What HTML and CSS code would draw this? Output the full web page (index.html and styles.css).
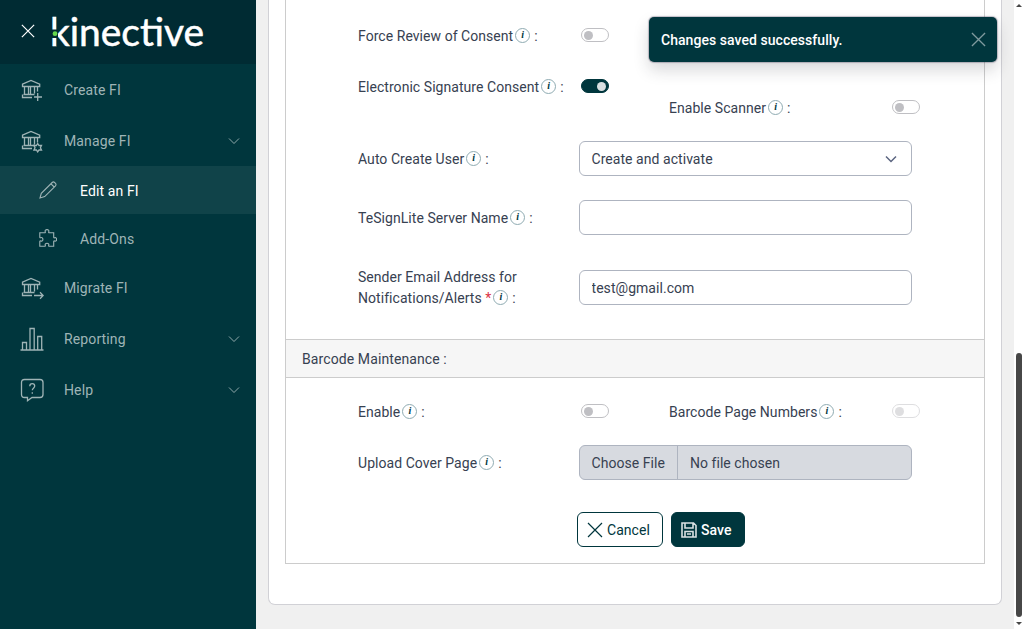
FILE: index.html
```
<!DOCTYPE html>
<html lang="en">
<head>
    <meta charset="UTF-8">
    <meta name="viewport" content="width=device-width, initial-scale=1.0">
    <title>Edit an FI - Kinective</title>
    <link rel="stylesheet" href="styles.css">
</head>
<body>
    <!-- shared icons -->
    <svg class="icon-defs" width="0" height="0">
        <symbol id="bank" viewBox="0 0 24 24">
            <path d="M2.500 6.200 11 2.500l8.700 3.700v2.300H2.500zM4.500 9v8M8.500 9v8M10.500 9v8M14.500 9v6.500M17.500 9v4.500M3.500 16.500h11M2.500 16.500v3h9.500"/>
        </symbol>
        <symbol id="close" viewBox="0 0 16 16">
            <path d="M1 1l14 14M15 1 1 15"/>
        </symbol>
        <symbol id="chevron" viewBox="0 0 12 8">
            <path d="M1 1.5l5 5 5-5"/>
        </symbol>
    </svg>

    <aside class="sidebar">
        <div class="sidebar-header">
            <svg class="menu-close"><use href="#close"/></svg>
            <svg class="brand" viewBox="0 0 160 52" role="img" aria-label="kinective">
                <text x="-1" y="39.500" textLength="154" lengthAdjust="spacingAndGlyphs">kinective</text>
                <rect class="brand-gap" x="0" y="23.500" width="7" height="8.500"/>
                <rect class="brand-gap" x="5.500" y="10" width="1.500" height="30"/>
                <circle class="brand-dot" cx="4" cy="27.700" r="2.400"/>
            </svg>
        </div>
        <nav>
            <a class="nav-item">
                <svg class="nav-icon" viewBox="0 0 24 24"><use href="#bank"/><path d="M17.700 15v8M14 19h8"/></svg>
                <span>Create FI</span>
            </a>
            <a class="nav-item">
                <svg class="nav-icon" viewBox="0 0 24 24"><use href="#bank"/><path d="M17.700 14.500l1.300 2 2.500-.1-1.100 2.300 1.100 2.300-2.500-.1-1.300 2-1.300-2-2.500.1 1.100-2.300-1.100-2.300 2.500.1z"/></svg>
                <span>Manage FI</span>
                <svg class="chevron"><use href="#chevron"/></svg>
            </a>
            <a class="nav-item sub active">
                <svg class="nav-icon small" viewBox="0 0 18 18"><path d="M1 17l1.300-4.700L13.200 1.500c.7-.7 1.700-.7 2.400 0l.9.9c.7.7.7 1.700 0 2.400L5.700 15.600zM12 2.800 15.200 6"/></svg>
                <span>Edit an FI</span>
            </a>
            <a class="nav-item sub">
                <svg class="nav-icon small" viewBox="0 0 18 18"><path d="M.8 3.800h5c.5 0 .7-.4.5-.9C5.700 1.500 6.600.6 8 .6s2.300.9 1.700 2.300c-.2.500 0 .9.500.9h4.500v4.500c0 .5.4.7.9.500 1.200-.5 2 .3 2 1.600s-.8 2.100-2 1.600c-.5-.2-.9 0-.9.500V17.200H10.200c-.5 0-.7-.4-.5-.9.500-1.200-.4-2-1.700-2s-2.200.8-1.700 2c.2.500 0 .9-.5.900h-5v-4.700c0-.5.400-.7.900-.5 1.400.5 2.200-.3 2.200-1.600s-.8-2.200-2.200-1.700c-.5.200-.9 0-.9-.5z"/></svg>
                <span>Add-Ons</span>
            </a>
            <a class="nav-item">
                <svg class="nav-icon" viewBox="0 0 24 24"><use href="#bank"/><path d="M14 19.500h9M20 16.300l3.200 3.200-3.200 3.200"/></svg>
                <span>Migrate FI</span>
            </a>
            <a class="nav-item">
                <svg class="nav-icon" viewBox="0 0 24 24"><path d="M.5 23h23M2.500 23v-7.500h4V23M10 23V1.500h4.200V23M17.700 23V9.500h4V23"/></svg>
                <span>Reporting</span>
                <svg class="chevron"><use href="#chevron"/></svg>
            </a>
            <a class="nav-item">
                <svg class="nav-icon" viewBox="0 0 24 24"><path d="M4.500 1.500h15.500q3 0 3 3v12q0 3-3 3h-8L7.500 22.700v-3.200h-3q-3 0-3-3v-12q0-3 3-3z"/><path d="M9.800 8.200c0-3.400 4.900-3.200 4.900-.2 0 2.200-2.400 2.100-2.400 4.200M12.300 14.200v1.600"/></svg>
                <span>Help</span>
                <svg class="chevron"><use href="#chevron"/></svg>
            </a>
        </nav>
    </aside>

    <main class="content">
        <div class="card">
            <form class="panel">
                <div class="section">
                    <div class="form-row">
                        <label>Force Review of Consent<i class="info">i</i>:</label>
                        <span class="switch"></span>
                    </div>
                    <div class="form-row signature">
                        <label>Electronic Signature Consent<i class="info">i</i>:</label>
                        <span class="switch on"></span>
                        <label class="scanner">Enable Scanner<i class="info">i</i>:</label>
                        <span class="switch scanner"></span>
                    </div>
                    <div class="form-row auto-create">
                        <label>Auto Create User<i class="info">i</i>:</label>
                        <div class="control select"><span>Create and activate</span><svg class="select-arrow"><use href="#chevron"/></svg></div>
                    </div>
                    <div class="form-row server">
                        <label>TeSignLite Server Name<i class="info">i</i>:</label>
                        <input class="control" type="text">
                    </div>
                    <div class="form-row email">
                        <label>
                            <span>Sender Email Address for</span><br>
                            <span>Notifications/Alerts</span> <b class="required">*</b><i class="info">i</i><span>:</span>
                        </label>
                        <input class="control" type="text" value="test@gmail.com">
                    </div>
                </div>

                <h2 class="section-title">Barcode Maintenance :</h2>

                <div class="section barcode">
                    <div class="form-row">
                        <label>Enable<i class="info">i</i>:</label>
                        <span class="switch"></span>
                        <label>Barcode Page Numbers<i class="info">i</i>:</label>
                        <span class="switch disabled"></span>
                    </div>
                    <div class="form-row upload">
                        <label>Upload Cover Page<i class="info">i</i>:</label>
                        <div class="control file">
                            <span class="file-button">Choose File</span>
                            <span class="file-name">No file chosen</span>
                        </div>
                    </div>
                    <div class="actions">
                        <button type="button" class="btn btn-outline"><svg><use href="#close"/></svg><span>Cancel</span></button>
                        <button type="button" class="btn btn-primary"><svg viewBox="0 0 16 16"><path d="M1 1h11.500L15 3.500V15H1zM4 1v5h8V1M4 15V9.500h8V15M6 12h4"/></svg><span>Save</span></button>
                    </div>
                </div>
            </form>
        </div>
    </main>

    <div class="scrollbar">
        <span class="arrow-up"></span>
        <span class="thumb"></span>
        <span class="arrow-down"></span>
    </div>

    <div class="toast">
        <span>Changes saved successfully.</span>
        <svg><use href="#close"/></svg>
    </div>
</body>
</html>
```

FILE: styles.css
```
* {
    margin: 0;
    padding: 0;
    box-sizing: border-box;
}

body {
    display: flex;
    height: 629px;
    overflow: hidden;
    background: #f0f0f0;
    color: #374151;
    font-family: Roboto, sans-serif;
    font-size: 14px;
    line-height: 21px;
    letter-spacing: 0.05px;
}

svg {
    display: block;
    flex: none;
    fill: none;
    stroke: currentColor;
}

.icon-defs {
    position: absolute;
}

/* sidebar */
.sidebar {
    width: 256px;
    flex: none;
    background: #00363d;
    color: #9fb4b6;
    letter-spacing: 0.12px;
}

.sidebar-header {
    display: flex;
    align-items: center;
    height: 64px;
    padding-left: 21px;
    background: #002b33;
    color: #fff;
}

.menu-close {
    width: 14px;
    height: 14px;
    margin-bottom: 2px;
    stroke-width: 1.4;
}

.brand {
    width: 160px;
    height: 52px;
    margin-left: 16px;
    stroke: none;
}

.brand text {
    fill: #fff;
    stroke: #fff;
    stroke-width: 0.5;
    font-family: Lato, sans-serif;
    font-size: 38px;
    letter-spacing: 0;
}

.brand-gap {
    fill: #002b33;
}

.brand-dot {
    fill: #65d84e;
}

.nav-item {
    display: flex;
    align-items: center;
    height: 51px;
    padding: 0 16px 0 20px;
}

.nav-item.sub {
    height: 48px;
    padding-left: 39px;
}

.nav-item span,
.toast span,
.btn span,
.select span {
    padding-top: 2px;
}

.nav-item.active {
    background: #104349;
    color: #fff;
}

.nav-item.active svg {
    color: #9fb4b6;
}

.nav-icon {
    width: 24px;
    height: 24px;
    margin-right: 20px;
    stroke-width: 1.3;
}

.nav-icon.small {
    width: 18px;
    height: 18px;
    margin-right: 23px;
    stroke-width: 1.1;
}

.chevron {
    width: 12px;
    height: 8px;
    margin-left: auto;
    stroke-width: 0.9;
}

/* page */
.content {
    width: 758px;
    padding: 0 12px;
}

.card {
    height: 605px;
    padding: 0 16px;
    background: #fff;
    border: 1px solid #d1d1d6;
    border-top: none;
    border-radius: 0 0 7px 7px;
}

.panel {
    height: 564px;
    border: 1px solid #ccc;
    border-top: none;
}

.section {
    height: 339px;
    padding: 18px 0 0 72px;
}

.section.barcode {
    height: auto;
    padding-top: 16px;
}

.form-row {
    display: grid;
    grid-template-columns: 221px 90px 221px 30px;
    grid-template-rows: 35px;
    align-items: center;
}

.form-row label {
    padding-top: 2px;
}

.signature,
.upload {
    margin-top: 16px;
}

.auto-create {
    margin-top: 37px;
}

.server {
    margin-top: 24px;
}

.email {
    margin-top: 35px;
}

.form-row.email label {
    padding-top: 0;
}

.scanner {
    transform: translateY(21px);
}

.required {
    color: #dc3545;
    font-weight: 400;
}

.info {
    display: inline-block;
    width: 15px;
    height: 15px;
    margin: -3px 4px 0 2px;
    border: 1px solid #8fabb2;
    border-radius: 50%;
    color: #00363d;
    font: italic bold 10px/12px "Liberation Serif", serif;
    letter-spacing: 0;
    text-align: center;
    vertical-align: 3px;
}

.switch {
    width: 28px;
    height: 14px;
    margin: -2px 0 0 2px;
    padding: 2px;
    border: 1px solid #bfbfc3;
    border-radius: 7px;
}

.switch::before {
    content: "";
    display: block;
    width: 9px;
    height: 9px;
    border-radius: 50%;
    background: #bfbfc3;
}

.switch.on {
    background: #00363d;
    border-color: #00363d;
}

.switch.on::before {
    margin-left: 13px;
    background: #d9dfe1;
}

.switch.disabled {
    opacity: 0.5;
}

.control {
    display: flex;
    align-items: center;
    grid-column: 2 / 5;
    width: 333px;
    height: 35px;
    padding: 0 12px 0 11.5px;
    background: #fff;
    border: 1px solid #aeb4c0;
    border-radius: 6px;
    color: #374151;
    font: inherit;
    letter-spacing: inherit;
}

input.control {
    padding-top: 1px;
}

.select-arrow {
    width: 12px;
    height: 8px;
    margin: 0 2px 0 auto;
    color: #5b6580;
    stroke-width: 1.5;
}

.control.file {
    align-items: stretch;
    background: #d7dae0;
    line-height: 34px;
}

.file-button {
    padding-right: 12px;
    border-right: 1px solid #aeb4c0;
}

.file-name {
    padding-left: 12px;
}

.section-title {
    height: 39px;
    padding-left: 16px;
    background: #f6f6f6;
    border: solid #ccc;
    border-width: 1px 0;
    font-size: 14px;
    font-weight: 400;
    line-height: 38px;
    letter-spacing: 0.1px;
}

.actions {
    display: flex;
    gap: 8px;
    padding: 32px 0 0 219px;
}

.btn {
    display: flex;
    align-items: center;
    gap: 4px;
    height: 35px;
    padding: 0 9px;
    border: 1px solid #00363d;
    border-radius: 6px;
    font: inherit;
    letter-spacing: inherit;
}

.btn svg {
    width: 16px;
    height: 16px;
    stroke-width: 1.2;
}

.btn-outline {
    width: 86px;
    background: #fff;
    color: #00363d;
}

.btn-primary {
    width: 74px;
    background: #00363d;
    color: #fff;
    font-weight: 500;
}

.btn-primary svg {
    color: #d9e1e2;
    stroke-width: 1.6;
}

/* scrollbar */
.scrollbar {
    position: relative;
    width: 10px;
    background: #fff;
}

.thumb {
    position: absolute;
    top: 353px;
    left: 2px;
    width: 6px;
    height: 264px;
    border-radius: 3px;
    background: #474747;
}

.arrow-up,
.arrow-down {
    position: absolute;
    left: 2px;
    border: 3px solid transparent;
}

.arrow-up {
    top: 1px;
    border-bottom-color: #474747;
}

.arrow-down {
    top: 622px;
    border-top-color: #474747;
}

/* toast */
.toast {
    position: absolute;
    top: 17px;
    left: 649px;
    display: flex;
    align-items: center;
    justify-content: space-between;
    width: 348px;
    height: 45px;
    padding: 0 11px 0 12px;
    background: #00363d;
    border-radius: 5px;
    box-shadow: 0 0 1px 1px rgba(60, 50, 80, 0.3), 0 8px 16px rgba(40, 40, 50, 0.18);
    color: #fff;
    font-weight: 500;
}

.toast svg {
    width: 15px;
    height: 15px;
    color: #7f9a9e;
    stroke-width: 1.4;
}
```
